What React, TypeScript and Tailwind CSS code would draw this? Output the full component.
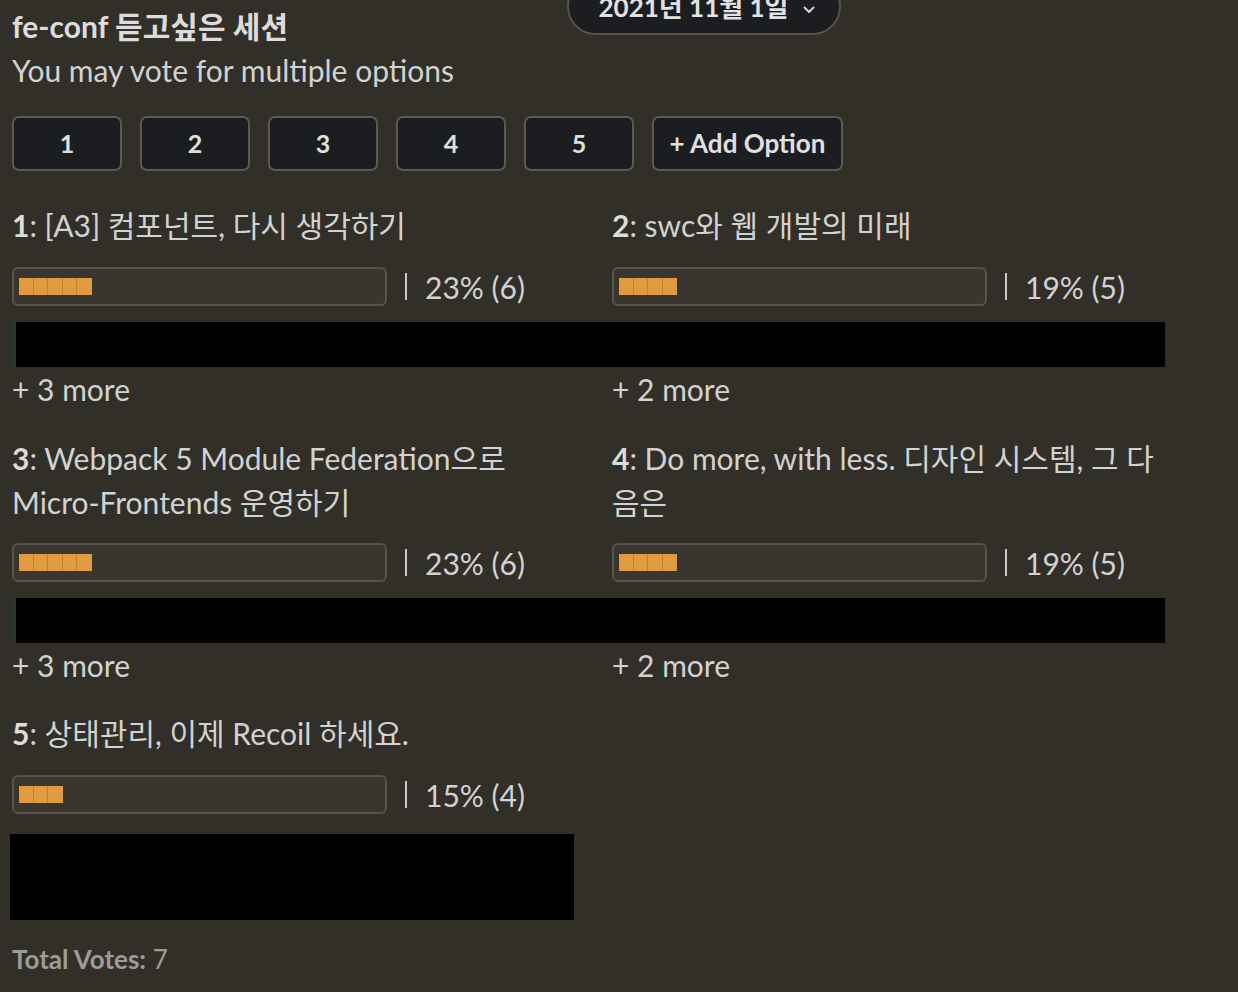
import React from "react";

const FONT = { fontFamily: 'Lato, "Noto Sans CJK KR", sans-serif' };

function Bar({ segs, label, mt }: { segs: number; label: string; mt: string }) {
  return (
    <div className={`flex items-center h-[39px] ${mt}`}>
      <div className="w-[375px] h-[39px] rounded-[6px] border-2 border-[#57534a] bg-[#3a362f] flex items-center pl-[5px]">
        <div className="flex h-[17px]">
          {Array.from({ length: segs }).map((_, i) => (
            <div
              key={i}
              className={
                i < segs - 1
                  ? "w-[14.6px] h-[17px] bg-[#e09a40] border-r border-[#bf8232]"
                  : "w-[14.6px] h-[17px] bg-[#e09a40]"
              }
            />
          ))}
        </div>
      </div>
      <div className="ml-[18px] text-[30px] leading-[36px] text-[#d1d2d3] flex items-center">
        <span className="inline-block w-[2px] h-[27px] bg-[#c9c9c9] mr-[18px]" />
        {label}
      </div>
    </div>
  );
}

function Option({
  n,
  title,
  segs,
  label,
  mt = "mt-[20px]",
}: {
  n: number;
  title: string;
  segs: number;
  label: string;
  mt?: string;
}) {
  return (
    <div className="w-[600px]">
      <div className="w-[555px] text-[30px] leading-[44px] text-[#d1d2d3]">
        <span className="font-bold text-[#dcdcdc]">{n}</span>: {title}
      </div>
      <Bar segs={segs} label={label} mt={mt} />
    </div>
  );
}

function Redact({ className }: { className: string }) {
  return <div className={className} />;
}

export default function App() {
  return (
    <div style={FONT} className="relative w-[1238px] h-[992px] bg-[#322f28] overflow-hidden">
      <div className="absolute left-[567px] top-[-22px] w-[274px] h-[57px] rounded-full bg-[#1c1d21] border-2 border-[#55544a] flex items-end justify-center pb-[11px] pl-[6px]">
        <span className="text-[26px] leading-[30px] font-bold text-[#e2e2e2]">2021년 11월 1일</span>
        <svg className="ml-[15px] mb-[8px]" width="12" height="8" viewBox="0 0 12 8" fill="none">
          <path d="M1.5 1.5 L6 6 L10.5 1.5" stroke="#d8d8d8" strokeWidth="1.8" strokeLinecap="round" strokeLinejoin="round" />
        </svg>
      </div>

      <div className="pl-[12px] pt-[6px]">
        <div className="text-[30px] leading-[40px] font-bold text-[#dcdcdc]">fe-conf 듣고싶은 세션</div>
        <div className="text-[30px] leading-[44px] text-[#d1d2d3] mt-[2px]">You may vote for multiple options</div>

        <div className="flex gap-[18px] mt-[24px]">
          {["1", "2", "3", "4", "5"].map((t) => (
            <div
              key={t}
              className="w-[110px] h-[55px] rounded-[7px] border-2 border-[#5d5950] bg-[#1c1d21] flex items-center justify-center text-[25px] font-bold text-[#e0e0e0]"
            >
              {t}
            </div>
          ))}
          <div className="w-[191px] h-[55px] rounded-[7px] border-2 border-[#5d5950] bg-[#1c1d21] flex items-center justify-center text-[26px] font-bold text-[#e0e0e0]">
            + Add Option
          </div>
        </div>

        <div className="flex mt-[32px]">
          <Option n={1} title="[A3] 컴포넌트, 다시 생각하기" segs={5} label="23% (6)" />
          <Option n={2} title="swc와 웹 개발의 미래" segs={4} label="19% (5)" />
        </div>
        <Redact className="mt-[16px] w-[1153px] h-[45px] bg-black border-l-[4px] border-[#2c3532]" />
        <div className="flex h-[36px] mt-[4px] text-[30px] leading-[36px] text-[#d1d2d3]">
          <div className="w-[600px]">+ 3 more</div>
          <div className="w-[600px]">+ 2 more</div>
        </div>

        <div className="flex mt-[29px]">
          <Option n={3} title="Webpack 5 Module Federation으로 Micro-Frontends 운영하기" segs={5} label="23% (6)" mt="mt-[19px]" />
          <Option n={4} title="Do more, with less. 디자인 시스템, 그 다음은" segs={4} label="19% (5)" mt="mt-[19px]" />
        </div>
        <Redact className="mt-[16px] w-[1153px] h-[45px] bg-black border-l-[4px] border-[#2c3532]" />
        <div className="flex h-[36px] mt-[4px] text-[30px] leading-[36px] text-[#d1d2d3]">
          <div className="w-[600px]">+ 3 more</div>
          <div className="w-[600px]">+ 2 more</div>
        </div>

        <div className="flex mt-[28px]">
          <Option n={5} title="상태관리, 이제 Recoil 하세요." segs={3} label="15% (4)" />
        </div>
        <Redact className="mt-[20px] ml-[-2px] w-[564px] h-[86px] bg-black" />

        <div className="mt-[25px] text-[26px] leading-[28px] text-[#9d9c98]">
          <span className="font-bold">Total Votes:</span> 7
        </div>
      </div>
    </div>
  );
}
